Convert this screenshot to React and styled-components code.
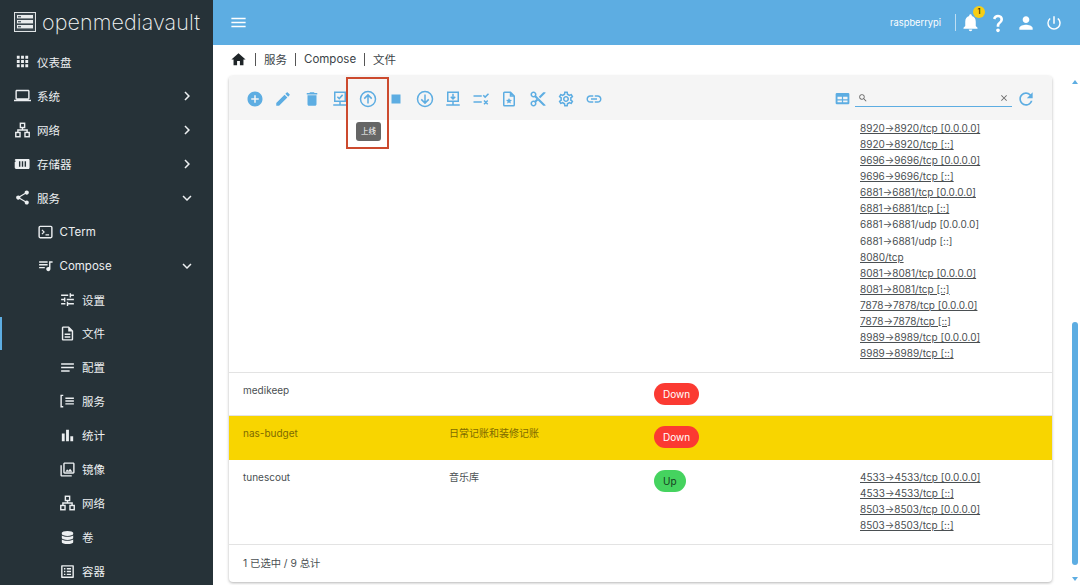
import React from "react";
import styled, { createGlobalStyle } from "styled-components";
import {
  MdApps, MdLaptop, MdShare, MdQueueMusic, MdTune, MdOutlineDescription, MdNotes,
  MdBarChart, MdOutlinePhotoLibrary, MdOutlineListAlt, MdChevronRight, MdExpandMore,
  MdMenu, MdNotifications, MdQuestionMark, MdPerson, MdPowerSettingsNew, MdHome,
  MdAddCircle, MdEdit, MdDelete, MdStop,
  MdContentCut, MdOutlineSettings, MdLink, MdSearch, MdClose, MdRefresh,
} from "react-icons/md";
import { FaDatabase } from "react-icons/fa";

const FONT = `Inter, "Noto Sans CJK SC", sans-serif`;
const BLUE = "#5dade2";

const GlobalStyle = createGlobalStyle`
  html, body { margin: 0; padding: 0; overflow: hidden; }
  body { font-family: ${FONT}; }
`;

const Page = styled.div`
  display: flex;
  width: 1080px;
  height: 585px;
  overflow: hidden;
  background: #fff;
`;

const Sidebar = styled.aside`
  width: 213px;
  flex-shrink: 0;
  height: 585px;
  overflow: hidden;
  background: #263238;
  color: #eceff1;
`;

const Brand = styled.div`
  display: flex;
  align-items: center;
  height: 45px;
  padding: 0 0 2px 14px;
  box-sizing: border-box;
  gap: 6px;
`;

const BrandName = styled.span`
  font: 200 21.5px Inter, sans-serif;
  color: #f2f4f5;
  letter-spacing: 0.1px;
`;

const NavItem = styled.div`
  position: relative;
  display: flex;
  align-items: center;
  height: 33.95px;
  padding-left: ${(p) => 14 + p.$level * 22.5}px;
  font-size: 11.5px;
  color: #eceff1;
`;

const ActiveBar = styled.span`
  position: absolute;
  left: 0;
  top: 0;
  bottom: 0;
  width: 2px;
  background: ${BLUE};
`;

const NavIcon = styled.span`
  display: flex;
  align-items: center;
  justify-content: center;
  width: 17px;
  height: 17px;
  margin-right: 6px;
  font-size: 17px;
`;

const NavChevron = styled.span`
  position: absolute;
  left: 178px;
  top: 8px;
  display: flex;
  font-size: 18px;
`;

const Main = styled.main`
  position: relative;
  flex: 1;
  min-width: 0;
  display: flex;
  flex-direction: column;
`;

const Topbar = styled.header`
  display: flex;
  align-items: center;
  height: 45px;
  flex-shrink: 0;
  padding: 0 17px 0 16px;
  background: ${BLUE};
  color: #fff;
`;

const TopIcon = styled.span`
  display: flex;
  margin-left: ${(p) => p.$gap || 0}px;
  font-size: ${(p) => p.$size || 18}px;
`;

const HostName = styled.span`
  margin-left: auto;
  font-size: 9.3px;
`;

const TopDivider = styled.span`
  width: 1px;
  height: 17px;
  margin-left: 14px;
  background: rgba(255, 255, 255, 0.6);
`;

const Bell = styled.span`
  position: relative;
  display: flex;
  margin-left: 4px;
  font-size: 21px;
`;

const BellBadge = styled.span`
  position: absolute;
  top: -6px;
  right: -4px;
  width: 12px;
  height: 12px;
  border-radius: 50%;
  background: #f7ce15;
  color: #3a3000;
  font-size: 7px;
  font-weight: 600;
  line-height: 12px;
  text-align: center;
`;

const Breadcrumb = styled.nav`
  display: flex;
  align-items: center;
  height: 31px;
  box-sizing: border-box;
  padding: 0 0 3px 17px;
  flex-shrink: 0;
  font-size: 11.5px;
  color: #3c4448;
`;

const Crumb = styled.span`
  display: flex;
  align-items: center;
  height: 13px;
  padding: 0 8px;
  border-left: 1px solid #555;
`;

const HomeIcon = styled.span`
  display: flex;
  font-size: 17px;
  margin-right: 8px;
  color: #1f2528;
`;

const Content = styled.div`
  flex: 1;
  min-height: 0;
  padding: 0 28px 3px 16px;
`;

const Card = styled.section`
  display: flex;
  flex-direction: column;
  height: 506px;
  border-radius: 4px;
  background: #fff;
  box-shadow: 0 1px 3px rgba(0, 0, 0, 0.3);
  overflow: hidden;
`;

const Toolbar = styled.div`
  display: flex;
  align-items: center;
  height: 44px;
  box-sizing: border-box;
  padding: 1px 16px 0 17px;
  flex-shrink: 0;
  background: #f5f5f5;
  color: ${BLUE};
`;

const ToolButton = styled.span`
  display: flex;
  align-items: center;
  justify-content: center;
  width: 18px;
  height: 18px;
  margin-right: 10.25px;
  font-size: 18px;
`;

const ViewButton = styled(ToolButton)`
  margin-left: auto;
  margin-right: 4px;
`;

const RefreshButton = styled(ToolButton)`
  margin: 0 0 0 4px;
  width: 20px;
  height: 20px;
  font-size: 20px;
`;

const SearchBox = styled.div`
  display: flex;
  align-items: center;
  justify-content: space-between;
  width: 157px;
  height: 16px;
  padding: 0 3px;
  box-sizing: border-box;
  border-bottom: 1px solid ${BLUE};
  color: #666;
  font-size: 10px;
`;

const Table = styled.div`
  flex: 1;
  min-height: 0;
  display: flex;
  flex-direction: column;
`;

const Row = styled.div`
  display: grid;
  grid-template-columns: 206px 205px 206px 1fr;
  height: ${(p) => p.$height}px;
  box-sizing: border-box;
  padding: 9px 0 0 14px;
  overflow: hidden;
  flex-shrink: 0;
  border-bottom: 1px solid ${(p) => (p.$selected ? "transparent" : "#e3e3e3")};
  background: ${(p) => (p.$selected ? "#f8d500" : "#fff")};
  color: ${(p) => (p.$selected ? "#7d6a00" : "#4a4f52")};
  font-size: 10px;
  line-height: 16.07px;
`;

const ClippedRow = styled(Row)`
  padding-top: 0;
  align-items: end;
`;

const PortList = styled.div`
  display: flex;
  flex-direction: column;
  padding-bottom: 11px;
`;

const Port = styled.span`
  text-decoration: ${(p) => (p.$plain ? "none" : "underline")};
  white-space: nowrap;
`;

const Chip = styled.span`
  display: inline-block;
  height: 22px;
  margin-top: 1px;
  padding: 0 9px;
  border-radius: 11px;
  line-height: 22px;
  font-size: 10px;
  background: ${(p) => (p.$up ? "#45d35f" : "#fb3a32")};
  color: ${(p) => (p.$up ? "#17401f" : "#fff")};
`;

const Footer = styled.div`
  display: flex;
  align-items: center;
  flex: 1;
  padding: 0 0 2px 14px;
  font-size: 10.3px;
  color: #4a4f52;
`;

const Highlight = styled.div`
  position: absolute;
  left: 133px;
  top: 77px;
  width: 43px;
  height: 72px;
  box-sizing: border-box;
  border: 2px solid #cc4a2e;
`;

const Tooltip = styled.div`
  position: absolute;
  left: 143px;
  top: 122px;
  width: 25px;
  height: 19px;
  border-radius: 3px;
  background: #666;
  color: #fff;
  font-size: 7.5px;
  line-height: 19px;
  text-align: center;
`;

const Scrollbar = styled.div`
  position: absolute;
  right: 2px;
  top: 322px;
  width: 6px;
  height: 243px;
  border-radius: 3px;
  background: ${BLUE};
`;

const ScrollArrow = styled.span`
  position: absolute;
  right: 2px;
  top: ${(p) => p.$top}px;
  width: 0;
  height: 0;
  border-left: 3px solid transparent;
  border-right: 3px solid transparent;
  ${(p) => (p.$down ? `border-top: 4px solid ${BLUE};` : `border-bottom: 4px solid ${BLUE};`)}
`;

const Glyph = ({ children, size = 18, fill = "none" }) => (
  <svg width={size} height={size} viewBox="0 0 24 24" fill={fill} stroke={fill === "none" ? "currentColor" : "none"} strokeWidth="2">
    {children}
  </svg>
);

const LogoIcon = () => (
  <svg width="22" height="20" viewBox="0 0 22 20" fill="none">
    <rect x="0.5" y="0.5" width="21" height="19" fill="#3a464d" stroke="#dfe3e5" />
    <rect x="3" y="3" width="16" height="3.4" fill="#e8ebec" />
    <rect x="3" y="8" width="16" height="3.4" fill="#e8ebec" />
    <rect x="3" y="13" width="16" height="3.4" fill="#e8ebec" />
    <rect x="4" y="4" width="3" height="1.4" fill="#55636b" />
    <rect x="4" y="9" width="3" height="1.4" fill="#55636b" />
    <rect x="4" y="14" width="3" height="1.4" fill="#55636b" />
  </svg>
);

const NetworkIcon = () => (
  <Glyph>
    <rect x="9" y="2.5" width="6" height="6" />
    <rect x="2.5" y="15.5" width="6" height="6" />
    <rect x="15.5" y="15.5" width="6" height="6" />
    <path d="M12 8.5V12M5.5 15.5V12h13v3.5" />
  </Glyph>
);

const StorageIcon = () => (
  <Glyph fill="currentColor">
    <path fillRule="evenodd" d="M3 5h18a2 2 0 0 1 1 2v10a2 2 0 0 1-1 2H3a2 2 0 0 1-2-2V9h1V7H1a2 2 0 0 1 2-2zm4 3v8h2V8H7zm4 0v8h2V8h-2zm4 0v8h2V8h-2z" />
  </Glyph>
);

const TerminalIcon = () => (
  <Glyph>
    <rect x="3" y="4" width="18" height="16" rx="1.5" />
    <path d="M7 9l3 3-3 3M12 16h5" strokeWidth="1.7" />
  </Glyph>
);

const ServiceListIcon = () => (
  <Glyph>
    <path d="M6 4H3v16h3M9 8h12M9 12h12M9 16h12" />
  </Glyph>
);

const ArrowCircleUpIcon = () => (
  <Glyph>
    <circle cx="12" cy="12" r="10" />
    <path d="M12 18V7M7 11.5L12 6.5l5 5" />
  </Glyph>
);

const ArrowCircleDownIcon = () => (
  <Glyph>
    <circle cx="12" cy="12" r="10" />
    <path d="M12 6v11M7 12.5l5 5 5-5" />
  </Glyph>
);

const MonitorCheckIcon = () => (
  <Glyph>
    <rect x="5" y="3" width="14" height="12" />
    <path d="M8.5 9l2.5 2.5 4.5-5M12 15v4M3 20h18" />
  </Glyph>
);

const MonitorDownIcon = () => (
  <Glyph>
    <rect x="5" y="3" width="14" height="12" />
    <path d="M12 5v7M9 9l3 3 3-3M12 15v4M3 20h18" />
  </Glyph>
);

const ListChecksIcon = () => (
  <Glyph>
    <path d="M2 8h11M2 16h11M15 7l2.5 2.5L22 5M16 14l5 5M21 14l-5 5" />
  </Glyph>
);

const FileStarIcon = () => (
  <svg width="18" height="18" viewBox="0 0 24 24">
    <path fill="none" stroke="currentColor" strokeWidth="2" d="M14 3H6a1 1 0 0 0-1 1v16a1 1 0 0 0 1 1h12a1 1 0 0 0 1-1V8z M14 3v5h5" />
    <path fill="currentColor" d="M12 10.5l1.2 2.6 2.8.3-2.1 1.9.6 2.8-2.5-1.4-2.5 1.4.6-2.8L8 13.4l2.8-.3z" />
  </svg>
);

const TableIcon = () => (
  <svg width="15" height="15" viewBox="0 0 24 24">
    <path fill="currentColor" fillRule="evenodd" d="M3 3h18a2 2 0 0 1 2 2v14a2 2 0 0 1-2 2H3a2 2 0 0 1-2-2V5a2 2 0 0 1 2-2zm1 6v4h7V9H4zm9 0v4h7V9h-7zm-9 6v3h7v-3H4zm9 0v3h7v-3h-7z" />
  </svg>
);

const NAV = [
  { label: "仪表盘", icon: <MdApps /> },
  { label: "系统", icon: <MdLaptop />, chevron: "right" },
  { label: "网络", icon: <NetworkIcon />, chevron: "right" },
  { label: "存储器", icon: <StorageIcon />, chevron: "right" },
  { label: "服务", icon: <MdShare />, chevron: "down" },
  { label: "CTerm", icon: <TerminalIcon />, level: 1 },
  { label: "Compose", icon: <MdQueueMusic />, level: 1, chevron: "down" },
  { label: "设置", icon: <MdTune />, level: 2 },
  { label: "文件", icon: <MdOutlineDescription />, level: 2, active: true },
  { label: "配置", icon: <MdNotes />, level: 2 },
  { label: "服务", icon: <ServiceListIcon />, level: 2 },
  { label: "统计", icon: <MdBarChart />, level: 2 },
  { label: "镜像", icon: <MdOutlinePhotoLibrary />, level: 2 },
  { label: "网络", icon: <NetworkIcon />, level: 2 },
  { label: "卷", icon: <FaDatabase size={13} />, level: 2 },
  { label: "容器", icon: <MdOutlineListAlt />, level: 2 },
];

const TOOLS = [
  <MdAddCircle />, <MdEdit />, <MdDelete />, <MonitorCheckIcon />, <ArrowCircleUpIcon />,
  <MdStop />, <ArrowCircleDownIcon />, <MonitorDownIcon />, <ListChecksIcon />, <FileStarIcon />,
  <MdContentCut />, <MdOutlineSettings />, <MdLink />,
];

const TOP_PORTS = [
  "8920→8920/tcp [0.0.0.0]", "8920→8920/tcp [::]", "9696→9696/tcp [0.0.0.0]", "9696→9696/tcp [::]",
  "6881→6881/tcp [0.0.0.0]", "6881→6881/tcp [::]", "6881→6881/udp [0.0.0.0]", "6881→6881/udp [::]",
  "8080/tcp", "8081→8081/tcp [0.0.0.0]", "8081→8081/tcp [::]", "7878→7878/tcp [0.0.0.0]",
  "7878→7878/tcp [::]", "8989→8989/tcp [0.0.0.0]", "8989→8989/tcp [::]",
];

const TUNE_PORTS = [
  "4533→4533/tcp [0.0.0.0]", "4533→4533/tcp [::]", "8503→8503/tcp [0.0.0.0]", "8503→8503/tcp [::]",
];

const PLAIN_PORTS = ["6881→6881/udp [0.0.0.0]", "6881→6881/udp [::]"];

const Ports = ({ items }) => (
  <PortList>
    {items.map((p) => (
      <Port key={p} $plain={PLAIN_PORTS.includes(p)}>{p}</Port>
    ))}
  </PortList>
);

export default function App() {
  return (
    <Page>
      <GlobalStyle />
      <Sidebar>
        <Brand>
          <LogoIcon />
          <BrandName>openmediavault</BrandName>
        </Brand>
        {NAV.map((item, i) => (
          <NavItem key={i} $level={item.level || 0}>
            {item.active && <ActiveBar />}
            <NavIcon>{item.icon}</NavIcon>
            {item.label}
            {item.chevron && (
              <NavChevron>{item.chevron === "right" ? <MdChevronRight /> : <MdExpandMore />}</NavChevron>
            )}
          </NavItem>
        ))}
      </Sidebar>
      <Main>
        <Topbar>
          <TopIcon $size={19}><MdMenu /></TopIcon>
          <HostName>raspberrypi</HostName>
          <TopDivider />
          <Bell>
            <MdNotifications />
            <BellBadge>1</BellBadge>
          </Bell>
          <TopIcon $gap={6} $size={22}><MdQuestionMark /></TopIcon>
          <TopIcon $gap={7} $size={20}><MdPerson /></TopIcon>
          <TopIcon $gap={9} $size={18}><MdPowerSettingsNew /></TopIcon>
        </Topbar>
        <Breadcrumb>
          <HomeIcon><MdHome /></HomeIcon>
          <Crumb>服务</Crumb>
          <Crumb>Compose</Crumb>
          <Crumb>文件</Crumb>
        </Breadcrumb>
        <Content>
          <Card>
            <Toolbar>
              {TOOLS.map((tool, i) => (
                <ToolButton key={i}>{tool}</ToolButton>
              ))}
              <ViewButton><TableIcon /></ViewButton>
              <SearchBox>
                <MdSearch />
                <MdClose />
              </SearchBox>
              <RefreshButton><MdRefresh /></RefreshButton>
            </Toolbar>
            <Table>
              <ClippedRow $height={253}>
                <span />
                <span />
                <span />
                <Ports items={TOP_PORTS} />
              </ClippedRow>
              <Row $height={43}>
                <span>medikeep</span>
                <span />
                <span><Chip>Down</Chip></span>
                <span />
              </Row>
              <Row $height={44} $selected>
                <span>nas-budget</span>
                <span>日常记账和装修记账</span>
                <span><Chip>Down</Chip></span>
                <span />
              </Row>
              <Row $height={85}>
                <span>tunescout</span>
                <span>音乐库</span>
                <span><Chip $up>Up</Chip></span>
                <Ports items={TUNE_PORTS} />
              </Row>
              <Footer>1 已选中 / 9 总计</Footer>
            </Table>
          </Card>
        </Content>
        <Highlight />
        <Tooltip>上线</Tooltip>
        <ScrollArrow $top={80} />
        <Scrollbar />
        <ScrollArrow $top={577} $down />
      </Main>
    </Page>
  );
}
